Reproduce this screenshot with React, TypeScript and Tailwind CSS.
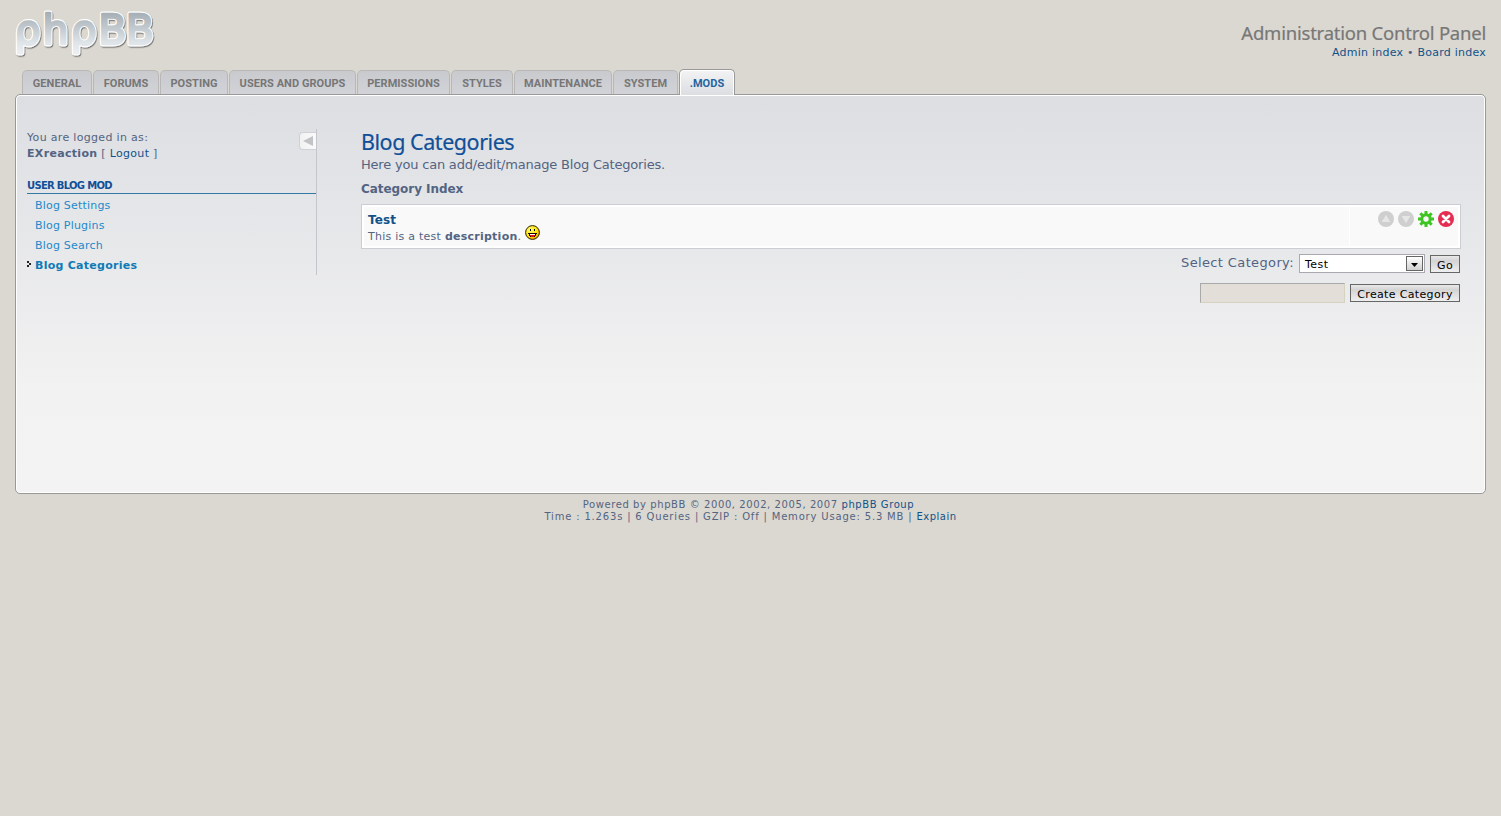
import React from "react";

const tabs: { label: string; box: string }[] = [
  { label: "GENERAL", box: "w-[70px]" },
  { label: "FORUMS", box: "w-[66px]" },
  { label: "POSTING", box: "w-[68px]" },
  { label: "USERS AND GROUPS", box: "w-[127px]" },
  { label: "PERMISSIONS", box: "w-[93px]" },
  { label: "STYLES", box: "w-[62px]" },
  { label: "MAINTENANCE", box: "w-[98px]" },
  { label: "SYSTEM", box: "w-[65px]" },
];

function Logo() {
  return (
    <svg width="145" height="54" viewBox="0 0 145 54" className="block overflow-visible" aria-label="phpBB">
      <defs>
        <linearGradient id="lg" x1="0" y1="4" x2="0" y2="44" gradientUnits="userSpaceOnUse">
          <stop offset="0" stopColor="#a3adb3" />
          <stop offset="0.75" stopColor="#dde3e7" />
          <stop offset="1" stopColor="#eaeef1" />
        </linearGradient>
        <filter id="sh" x="-10%" y="-10%" width="130%" height="130%">
          <feDropShadow dx="0.8" dy="1.2" stdDeviation="0.6" floodColor="#555" floodOpacity="0.75" />
        </filter>
      </defs>
      <g fontFamily="'DejaVu Sans', sans-serif" fontSize="41" strokeLinejoin="round">
        {["#ffffff", "url(#lg)"].map((c, i) => (
          <g key={c} fill={c} stroke={c} strokeWidth={i ? 2.6 : 4.8} filter={i ? undefined : "url(#sh)"}>
            <text x="-0.4 27.6 55.6 83.2 110.800" y="35.5">ρhρBB</text>
          </g>
        ))}
      </g>
    </svg>
  );
}

function Smiley() {
  return (
    <svg width="15" height="15" viewBox="0 0 15 15" className="block">
      <defs>
        <radialGradient id="sm" cx="0.35" cy="0.3" r="0.8">
          <stop offset="0" stopColor="#fff97a" />
          <stop offset="0.6" stopColor="#ffe500" />
          <stop offset="1" stopColor="#f08c00" />
        </radialGradient>
      </defs>
      <circle cx="7.5" cy="7.5" r="6.9" fill="url(#sm)" stroke="#2b2100" strokeWidth="1" />
      <path d="M5 4h1v2H5zM9 4h1v2H9z" fill="#000" />
      <path d="M3 8h9v1h-1v2h-1v1H5v-1H4V9H3z" fill="#1a0500" />
      <path d="M5 9h5v1H5z" fill="#fff" />
      <path d="M5 10h5v1H9v1H6v-1H5z" fill="#f01010" />
    </svg>
  );
}

function Actions() {
  return (
    <svg width="76" height="16" viewBox="0 0 76 16" className="block">
      <circle cx="8" cy="8" r="8" fill="#cfcfcf" />
      <path d="M8 3.8 12.300 11H3.700z" fill="#e6e6e6" />
      <circle cx="28" cy="8" r="8" fill="#cfcfcf" />
      <path d="M28 12.2 23.700 5h8.600z" fill="#e6e6e6" />
      <g stroke="#3fc522" fill="none">
        <path strokeWidth="3" d="M48 0v4M48 12v4M40 8h4M52 8h4M42.3 2.3l3 3M50.7 10.7l3 3M53.7 2.3l-3 3M45.3 10.7l-3 3" />
        <circle cx="48" cy="8" r="4.2" strokeWidth="3" />
      </g>
      <circle cx="68" cy="8" r="8" fill="#e52d54" />
      <path d="m65 5 6 6M71 5l-6 6" stroke="#fff" strokeWidth="2.8" strokeLinecap="round" />
    </svg>
  );
}

const btn =
  "h-[18px] border border-[#666] bg-linear-to-b from-[#e9e9e9] via-[#d4d4d4] via-30% to-[#efefef] pt-px text-[11px] leading-[17px] tracking-[0.35px] text-black whitespace-nowrap text-center";

export default function App() {
  return (
    <div className="min-h-[816px] w-full bg-[#dbd8d1] px-[15px] font-['DejaVu_Sans',sans-serif] text-[11px] text-[#536482]">
      <header className="flex h-[69px] justify-between">
        <div className="pt-[8px]">
          <Logo />
        </div>
        <div className="pt-[21px] text-right">
          <h1 className="font-['Noto_Sans',sans-serif] text-[18.5px] leading-[24px] tracking-[-0.22px] text-[#777] [-webkit-text-stroke:0.2px]">Administration Control Panel</h1>
          <p className="text-[11px] leading-[16px] tracking-[0.24px]">
            <a className="text-[#105289]">Admin index</a> • <a className="text-[#105289]">Board index</a>
          </p>
        </div>
      </header>

      <nav className="relative z-10 -mb-px flex h-[26px] items-end gap-px pl-[7px] font-['Roboto',sans-serif] text-[11px] font-bold tracking-[0.05px]">
        {tabs.map((t) => (
          <a
            key={t.label}
            className={`${t.box} mb-px flex h-[24px] items-center justify-center rounded-t-[5px] border border-b-0 border-[#bab8b7] bg-linear-to-b from-[#c8cace] to-[#d2d3d8] pt-[4px] whitespace-nowrap text-[#767676]`}
          >
            {t.label}
          </a>
        ))}
        <a className="flex h-[26px] w-[56px] items-center justify-center rounded-t-[5px] border border-b-0 border-[#999] bg-linear-to-b from-[#f3f3f4] to-[#dcdee2] pt-[3px] text-[#23649f] shadow-[inset_1px_1px_0_#fff,inset_-1px_0_0_#fff]">
          .MODS
        </a>
      </nav>

      <main className="flex h-[400px] rounded-[5px] border border-[#999] bg-linear-to-b from-[#dcdee2] via-[#f2f2f2] via-75% to-[#f3f3f3] shadow-[inset_0_0_0_1px_#fff]">
        <aside className="mt-[34px] ml-[11px] flex h-[146px] w-[290px] flex-col border-r border-[#c4c6cc]">
          <div className="flex justify-between">
            <p className="pt-px leading-[16px] tracking-[0.32px]">
              You are logged in as:
              <br />
              <strong>EXreaction</strong> [ <a className="text-[#105289]">Logout</a> ]
            </p>
            <div className="mt-[3px] flex h-[18px] w-[17px] items-center justify-center rounded-l-[4px] border border-r-0 border-[#d0d1d6] bg-linear-to-r from-[#f2f2f2] to-[#fafafa]">
              <svg width="10" height="10" viewBox="0 0 10 10">
                <path d="M0 5 10 0v10z" fill="#c2c2c7" />
              </svg>
            </div>
          </div>
          <h2 className="mt-[17px] h-[15px] border-b border-[#327aa5] text-[10px] leading-[14px] font-bold tracking-[-0.7px] text-[#115098]">USER BLOG MOD</h2>
          <ul className="pt-[2px] pl-[8px] leading-[20px] tracking-[0.2px] text-[#1d8ac9]">
            <li>Blog Settings</li>
            <li>Blog Plugins</li>
            <li>Blog Search</li>
            <li className="relative font-bold tracking-[0.27px] text-[#0f7ab5]">
              <svg className="absolute top-[5px] -left-[8px]" width="4" height="6" viewBox="0 0 4 6" shapeRendering="crispEdges">
                <path d="M0 0h2v2H0zM2 2h2v2H2zM0 4h2v2H0z" fill="#222" />
              </svg>
              Blog Categories
            </li>
          </ul>
        </aside>

        <section className="mt-[34px] mr-[24px] ml-[44px] flex-1">
          <h1 className="h-[27px] font-['Noto_Sans',sans-serif] text-[21.5px] leading-[25px] tracking-[-0.45px] text-[#115098] [-webkit-text-stroke:0.2px]">Blog Categories</h1>
          <p className="h-[18px] text-[13px] leading-[18px] tracking-[-0.2px]">Here you can add/edit/manage Blog Categories.</p>
          <h3 className="mt-[6px] h-[18px] text-[12px] leading-[18px] font-bold tracking-[-0.05px]">Category Index</h3>
          <div className="mt-[6px] flex h-[45px] border border-[#ccced3] bg-white p-[2px]">
            <div className="flex-1 bg-[#f9f9f9] pt-[4px] pl-[4px]">
              <div className="h-[17px] text-[12px] leading-[18px] font-bold tracking-[0.1px] text-[#105289]">Test</div>
              <div className="flex leading-[17px] tracking-[0.25px]">
                <span>
                  This is a test <strong>description</strong>.
                </span>
                <span className="-mt-[3px] ml-[4px]">
                  <Smiley />
                </span>
              </div>
            </div>
            <div className="ml-px flex w-[108px] justify-end bg-[#f9f9f9] pt-[4px] pr-[4px]">
              <Actions />
            </div>
          </div>
          <div className="mt-[5px] flex h-[19px] items-start justify-end pr-px">
            <span className="mr-[5px] text-[13px] leading-[17px] tracking-[0.37px]">Select Category:</span>
            <div className="mr-[5px] flex h-[19px] w-[126px] justify-between border border-[#a9a9af] bg-white p-px pl-[5px] text-black">
              <span className="leading-[18px] tracking-[0.5px]">Test</span>
              <span className="flex h-[15px] w-[17px] items-center justify-center border border-[#666] bg-linear-to-b from-white to-[#d0d0d0]">
                <svg width="7" height="4" viewBox="0 0 7 4" className="mt-[3px]">
                  <path d="M0 0h7L3.500 4z" fill="#000" />
                </svg>
              </span>
            </div>
            <button className={`${btn} mt-px w-[30px]`}>Go</button>
          </div>
          <div className="mt-[10px] flex h-[20px] justify-end pr-px">
            <div className="mr-[5px] h-[20px] w-[145px] border border-[#d5d3bf] border-t-[#aaa9a9] border-l-[#aaa9a9] bg-[#e3dfd8]" />
            <button className={`${btn} mt-px w-[110px]`}>Create Category</button>
          </div>
        </section>
      </main>

      <footer className="pt-[5px] pr-[4px] text-center text-[10px] leading-[12px]">
        <p className="tracking-[0.58px]">
          Powered by phpBB © 2000, 2002, 2005, 2007 <a className="text-[#105289]">phpBB Group</a>
        </p>
        <p className="pl-[4px] tracking-[0.82px]">
          Time : 1.263s | 6 Queries | GZIP : Off | Memory Usage: 5.3 MB | <a className="tracking-[0.5px] text-[#105289]">Explain</a>
        </p>
      </footer>
    </div>
  );
}
